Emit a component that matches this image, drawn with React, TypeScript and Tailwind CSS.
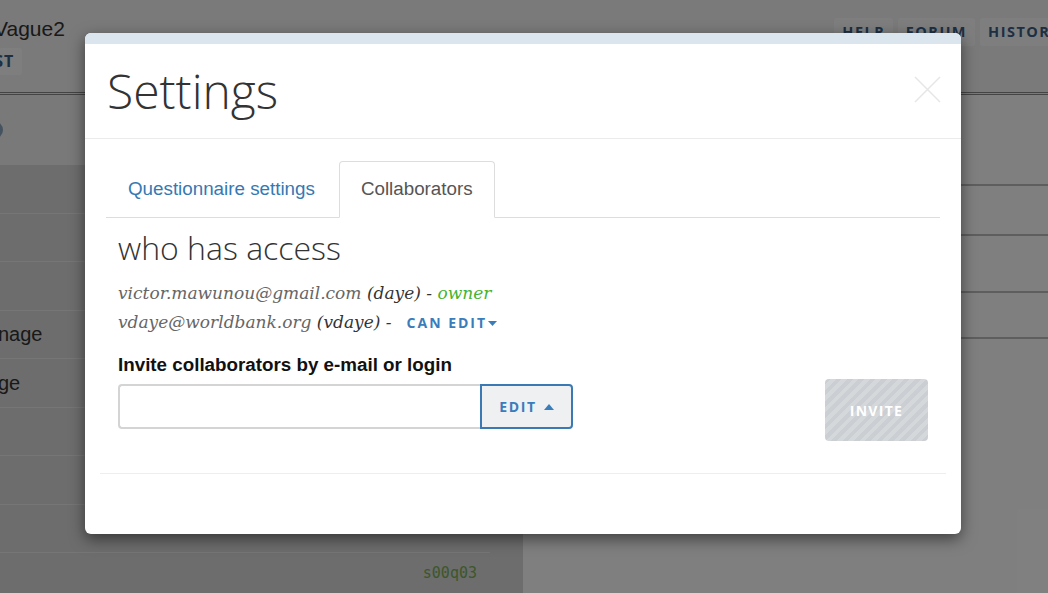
import React from "react";

function CaretDown() {
  return (
    <svg width="9" height="5" viewBox="0 0 9 5" className="inline-block ml-[1px] mb-[2px]">
      <path d="M0 0 L9 0 L4.5 5 Z" fill="currentColor" />
    </svg>
  );
}

function CaretUp() {
  return (
    <svg width="10" height="6" viewBox="0 0 10 6" className="inline-block">
      <path d="M0 6 L10 6 L5 0 Z" fill="currentColor" />
    </svg>
  );
}

function Background() {
  const leftRows = ["", "", "", "nage", "ge", "", "", ""];
  return (
    <div className="flex flex-col h-full">
      <header className="h-[95px] shrink-0 bg-[#f4f4f4] border-b-[3px] border-double border-[#888] flex justify-between">
        <div className="pt-[16px]">
          <div className="-ml-[6px] text-[21px] leading-[26px] text-[#333]">Vague2</div>
          <div className="mt-[6px] -ml-[34px] inline-block bg-[#fdfdfd] rounded-[3px] px-[8px] h-[27px] leading-[27px] text-[16px] font-bold tracking-[1px] text-[#3b5f86] font-['Open_Sans',sans-serif]">
            TEST
          </div>
        </div>
        <nav className="flex gap-[5px] pt-[18px] -mr-[21px] font-['Open_Sans',sans-serif]">
          {["HELP", "FORUM", "HISTORY"].map((t) => (
            <div
              key={t}
              className="h-[28px] px-[8px] leading-[28px] bg-[#fdfdfd] rounded-[3px] text-[14.5px] font-bold tracking-[1.5px] text-[#3b5f86]"
            >
              {t}
            </div>
          ))}
        </nav>
      </header>
      <div className="flex flex-1">
        <div className="w-[523px] shrink-0 flex flex-col bg-[#dadada]">
          <div className="h-[70px] bg-[#f2f2f2] flex items-center">
            <div className="-ml-[15px] w-[18px] h-[18px] rounded-full bg-[#8aa4bf]" />
          </div>
          {leftRows.map((t, i) => (
            <div
              key={i}
              className="h-[48.5px] mr-[33px] border-b border-[#ececec] flex items-center text-[20px] text-[#333] -ml-[2px]"
            >
              {t}
            </div>
          ))}
          <div className="flex-1 mr-[33px] flex items-center justify-end pr-[13px] font-['DejaVu_Sans_Mono',monospace] text-[15px] text-[#7aae55]">
            s00q03
          </div>
        </div>
        <div className="flex-1 flex flex-col bg-white">
          <div className="h-[91px] border-b-2 border-[#bdbdbd]" />
          <div className="h-[50px] border-b-2 border-[#bdbdbd]" />
          <div className="h-[57px] border-b-2 border-[#bdbdbd]" />
          <div className="h-[46px] border-b-2 border-[#bdbdbd]" />
        </div>
      </div>
    </div>
  );
}

export default function App() {
  return (
    <div className="relative w-[1048px] h-[593px] overflow-hidden bg-white font-['Liberation_Sans',Arial,sans-serif]">
      <Background />
      <div className="absolute inset-0 bg-black/50" />
      <div className="absolute left-[85px] top-[33px] w-[876px] h-[501px] bg-white rounded-[6px] overflow-hidden shadow-[0_5px_15px_rgba(0,0,0,0.5)] flex flex-col">
        <div className="h-[11px] shrink-0 bg-[#dbe5ee]" />
        <div className="h-[95px] shrink-0 border-b border-[#ebebeb] px-[20px] pl-[22px] flex items-center justify-between">
          <h1 className="font-['Open_Sans',sans-serif] font-light text-[48px] leading-[48px] text-[#333]">
            Settings
          </h1>
          <svg width="27" height="27" viewBox="0 0 27 27" className="-mt-[4px]">
            <path d="M1 1 L26 26 M26 1 L1 26" stroke="#e6e6e6" strokeWidth="1.5" />
          </svg>
        </div>
        <div className="px-[21px] pt-[22px]">
          <div className="flex items-end border-b border-[#dddddd]">
            <div className="h-[56px] px-[22px] mr-[2px] flex items-center text-[18.8px] text-[#3579b3]">
              Questionnaire settings
            </div>
            <div className="h-[57px] -mb-px px-[21px] flex items-center text-[18.8px] text-[#555] bg-white border border-[#dddddd] border-b-white rounded-t-[4px]">
              Collaborators
            </div>
          </div>
          <div className="px-[12px]">
            <h2 className="mt-[12px] font-['Open_Sans',sans-serif] font-light text-[32px] leading-[36px] text-[#333]">
              who has access
            </h2>
            <div className="mt-[13px] font-['DejaVu_Serif',Georgia,serif] italic text-[17px] leading-[29px]">
              <div>
                <span className="text-[#666]">victor.mawunou@gmail.com</span>{" "}
                <span className="text-[#333]">(daye) -</span>{" "}
                <span className="text-[#44b430]">owner</span>
              </div>
              <div>
                <span className="text-[#666]">vdaye@worldbank.org</span>{" "}
                <span className="text-[#333]">(vdaye) -</span>
                <span className="ml-[15px] not-italic font-['Open_Sans',sans-serif] font-bold text-[14px] tracking-[2px] text-[#3a7dbb]">
                  CAN EDIT
                  <CaretDown />
                </span>
              </div>
            </div>
            <div className="mt-[17px] text-[18.8px] leading-[22px] font-bold text-[#111]">
              Invite collaborators by e-mail or login
            </div>
            <div className="mt-[3px] flex items-start justify-between">
              <div className="flex h-[45px] mt-[5px]">
                <input
                  type="text"
                  className="w-[362px] h-full border-2 border-r-0 border-[#d4d4d4] rounded-l-[4px] outline-none px-3"
                />
                <button className="w-[93px] h-full border-2 border-[#3a79b3] rounded-r-[4px] bg-[#eef0f2] flex items-center justify-center gap-[7px] font-['Open_Sans',sans-serif] font-bold text-[14px] tracking-[1.6px] text-[#3a7dbb]">
                  EDIT
                  <CaretUp />
                </button>
              </div>
              <button className="w-[103px] h-[62px] rounded-[4px] bg-[repeating-linear-gradient(135deg,#cbcfd3_0px,#cbcfd3_4px,#d5d8db_4px,#d5d8db_8px)] font-['Open_Sans',sans-serif] font-bold text-[14px] tracking-[1.3px] text-white">
                INVITE
              </button>
            </div>
          </div>
        </div>
        <div className="mt-[32px] mx-[15px] border-t border-[#eeeeee]" />
      </div>
    </div>
  );
}
